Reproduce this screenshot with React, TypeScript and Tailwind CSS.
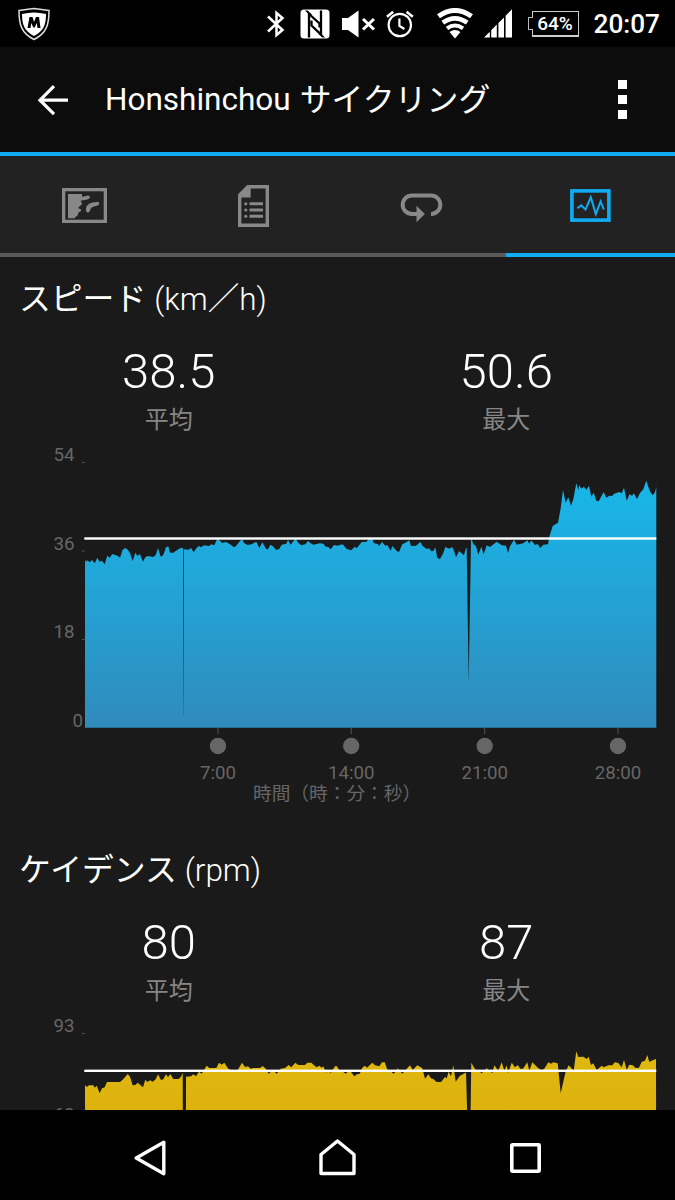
import type { ReactNode } from 'react'

type Segment = { x: number; y: number; points: string }

type Metric = {
  id: string
  title: string
  unit: ReactNode
  average: string
  max: string
  scale: string[]
  averageY: number
  colors: [string, string]
  times: { x: number; label: string }[]
  segments: Segment[]
}

// points are in thirds of a pixel, counted from the segment's own origin
const SPEED: Segment[] = [
  {
    x: 80,
    y: 90,
    points:
      '15,102 18,111 22,106 29,112 36,105 44,115 52,98 59,110 66,107 74,118 82,92 89,98 97,87 114,93 120,98 128,74 136,69 143,74 150,84 158,108 166,83 172,92 180,88 189,110 196,97 204,93 220,96 227,90 234,69 242,95 250,90 258,67 265,64 270,83 280,83 288,77 303,68 308,70 312,73 326,74 333,69 341,82 350,68 357,63 363,67 372,61 388,63 394,58 403,61 411,43 417,44 426,54 438,51 450,58 462,67 468,63 478,50 486,42 492,54 503,60 515,58 529,50 538,69 547,52 557,70 563,74 571,59 578,63 588,74 597,73 605,59 619,56 624,45 632,59 640,49 647,42 655,53 664,61 676,58 684,48 692,55 700,59 720,55',
  },
  {
    x: 310,
    y: 90,
    points:
      '40,56 47,65 55,66 62,73 72,60 82,62 98,58 110,72 124,76 134,65 140,70 155,51 170,50 175,43 187,43 192,55 203,57 207,63 216,51 226,62 232,60 242,77 247,63 260,78 267,81 277,58 290,51 298,46 303,63 318,62 331,51 338,63 350,72 357,70 364,79 370,78 376,67 382,99 390,102 400,84 406,66 418,71 426,66 431,74 438,97 447,78 462,91 468,68 470,70 476,475 483,45 485,43 490,57 498,64 505,89 514,65 521,88 530,61 540,66 560,50 575,61 588,62 594,84 600,64 612,44 620,59 640,55 652,46 658,57 661,50',
  },
  {
    x: 530,
    y: 35,
    points:
      '5,212 15,225 23,222 31,234 40,224 54,223 58,200 68,168 84,158 92,115 99,60 107,98 115,82 123,107 130,88 139,40 145,60 148,46 154,56 162,50 169,60 177,47 184,80 191,68 199,92 206,94 221,66 229,83 238,77 246,78 253,71 268,66 275,70 282,53 290,92 299,72 306,78 311,70 321,87 330,69 340,58 349,32 354,48 361,66 368,76 375,67 379,50',
  },
]

const CADENCE: Segment[] = [
  {
    x: 0,
    y: -176,
    points:
      '255,765 260,771 267,766 280,766 284,773 290,767 299,790 306,775 314,772 321,756 360,756 368,749 383,732 390,740 398,766 406,765 413,758 429,772 436,749 442,756 450,751 458,755 467,748 474,733 483,750 490,748 498,733 504,742 511,732 520,747 536,747 543,740 548,728 549,1100 557,1100 558,740 573,739 580,733 588,739 597,725 605,731 620,707 628,714 649,714 657,698 665,704 673,698 685,716 695,721 712,722 726,698 735,711 744,709 752,716 760,714 780,714 788,708 797,716 806,731 818,720 830,731 842,716 855,714 866,705 874,712 886,698 895,705 915,705 922,698 934,698 942,706 950,712 958,707 965,713 970,709 978,728 985,719 992,729 1005,709',
  },
  {
    x: 335,
    y: -176,
    points:
      '5,708 12,720 20,722 32,731 42,722 50,728 58,739 66,733 74,731 82,713 90,707 96,713 112,698 120,706 133,709 141,697 149,697 158,722 168,724 175,731 182,725 188,715 202,731 210,722 225,706 233,720 247,706 262,715 270,746 280,733 288,745 295,747 305,756 318,756 330,741 335,745 341,725 348,739 355,706 362,755 374,738 390,729 393,728 398,900 406,900 409,698 420,718 430,722 440,730 455,715 472,730 478,706 490,722 500,697 508,722 515,706 519,730 530,698 540,712 548,705 556,716 564,716 577,697 583,722 592,697 610,715 620,720 628,716 640,697 648,701 655,697 668,700 677,790 692,724 701,706 716,722 724,664 730,681 745,680 755,687 761,680 768,705 775,700 785,720 800,707 806,712 820,706 832,706 839,697 850,699 860,712 867,690 875,720 883,704 893,706 902,714 912,713 920,695 930,692 937,675 943,696 950,692 955,690 963,687',
  },
]

const METRICS: Metric[] = [
  {
    id: 'speed',
    title: 'スピード',
    unit: <>(km<b className="font-normal">／</b>h)</>,
    average: '38.5',
    max: '50.6',
    scale: ['54', '36', '18'],
    averageY: 103.5,
    colors: ['#18b7ea', '#308bbc'],
    times: [
      { x: 218, label: '7:00' },
      { x: 351.2, label: '14:00' },
      { x: 484.7, label: '21:00' },
      { x: 618, label: '28:00' },
    ],
    segments: SPEED,
  },
  {
    id: 'cadence',
    title: 'ケイデンス',
    unit: '(rpm)',
    average: '80',
    max: '87',
    scale: ['93', '62'],
    averageY: 64.8,
    colors: ['#dfb90f', '#d99a08'],
    times: [],
    segments: CADENCE,
  },
]

const BASELINE = 292.7

function areaPath(segments: Segment[]) {
  const points = segments.flatMap(segment =>
    segment.points.split(' ').map(pair => {
      const [x, y] = pair.split(',').map(Number)
      return `${(segment.x + x / 3).toFixed(1)} ${Math.min(segment.y + y / 3, BASELINE).toFixed(1)}`
    })
  )
  return `M85 ${BASELINE}L${points.join('L')}L656.3 ${BASELINE}Z`
}

function Chart({ metric }: { metric: Metric }) {
  const hasTimes = metric.times.length > 0

  return (
    <svg className="block h-[393px] w-[675px] shrink-0" viewBox="0 0 675 393">
      <defs>
        <linearGradient id={metric.id} x1="0" y1="45" x2="0" y2="293" gradientUnits="userSpaceOnUse">
          <stop offset="0" stopColor={metric.colors[0]} />
          <stop offset="1" stopColor={metric.colors[1]} />
        </linearGradient>
        <linearGradient id="pause" x1="0" y1="113" x2="0" y2="281" gradientUnits="userSpaceOnUse">
          <stop offset="0" stopColor="#12405a" />
          <stop offset="0.5" stopColor="#1c5878" />
          <stop offset="1" stopColor="#2c7aa5" />
        </linearGradient>
      </defs>

      <path d={areaPath(metric.segments)} fill={`url(#${metric.id})`} />
      {metric.id === 'speed' && <rect x="183" y="113" width="1" height="168" fill="url(#pause)" />}
      <rect x="84.3" y={metric.averageY - 1.2} width="572" height="2.4" fill="#fff" />

      <g fill="#666" fontSize="18.7" fontFamily="Roboto, sans-serif">
        {metric.scale.map((value, i) => (
          <g key={value}>
            <text x="74.5" y={26.4 + i * 88.5} textAnchor="end">{value}</text>
            <rect x="82" y={27 + i * 88.5} width="2.5" height="1" fill="#555" />
          </g>
        ))}
        {hasTimes && <text x="83" y="291.8" textAnchor="end">0</text>}
        {metric.times.map(time => (
          <g key={time.label}>
            <rect x={time.x - 0.5} y="293" width="1" height="6" fill="#555" />
            <circle cx={time.x} cy="311" r="8.2" />
            <text x={time.x} y="344" textAnchor="middle">{time.label}</text>
          </g>
        ))}
      </g>
      {hasTimes && (
        <text x="253" y="365.2" fill="#666" fontSize="18.7" fontFamily="'Noto Sans CJK JP', sans-serif">
          時間（時：分：秒）
        </text>
      )}
    </svg>
  )
}

function Stat({ value, label }: { value: string; label: string }) {
  return (
    <div className="flex flex-1 flex-col items-center">
      <div className="flex h-16 items-center text-[49px] leading-none font-light">{value}</div>
      <div className="flex h-8 items-center pb-0.5 font-['Noto_Sans_CJK_JP'] text-2xl leading-none text-[#868686]">{label}</div>
    </div>
  )
}

function MetricSection({ metric }: { metric: Metric }) {
  return (
    <section className="flex h-[571px] shrink-0 flex-col">
      <h2 className="flex h-[82px] items-center gap-[8px] pl-[19px] text-[31.5px] leading-none font-light">
        <span className="pb-0.5 font-['Noto_Sans_CJK_JP'] text-[31.8px] font-normal">{metric.title}</span>
        <span className="pt-[3px] font-[Roboto,'Noto_Sans_CJK_JP']">
          {metric.unit}
        </span>
      </h2>
      <div className="flex">
        <Stat value={metric.average} label="平均" />
        <Stat value={metric.max} label="最大" />
      </div>
      <Chart metric={metric} />
    </section>
  )
}

function StatusBar() {
  return (
    <div className="flex h-[47px] shrink-0 items-center bg-black pr-[15px] pl-[17px]">
      <svg className="h-[34px] w-[34px]" viewBox="0 0 34 34">
        <path d="M2 3.5Q9 2.5 17 1.5Q25 2.5 32 3.5C32 17 30 26 17 32.5C4 26 2 17 2 3.5Z" fill="none" stroke="#ddd" strokeWidth="1.5" />
        <path d="M5 7Q17 4 29 7C29 17 27 24 17 29C7 24 5 17 5 7Z" fill="#fff" />
        <path d="M10.5 21L12.5 10h3L17 15l2-5h3l1.5 11h-3l-.8-5-2 4.5h-1.4l-2-4.5-.8 5z" fill="#000" />
      </svg>
      <div className="ml-auto flex items-center text-white">
        <svg className="h-[28px] w-[18px]" viewBox="0 0 18 28" fill="none" stroke="currentColor" strokeWidth="2.5">
          <path d="M1 6.5l14.5 13.5-6 5V3l6 5L1 21.5" />
        </svg>
        <svg className="ml-[15px] h-[30px] w-[30px]" viewBox="0 0 30 30">
          <rect x="0.5" y="0.5" width="29" height="29" rx="3.5" fill="currentColor" />
          <path d="M9 28.5V5L19.5 14.5v4M21 1.5V25.5L11.5 16.5v-5" fill="none" stroke="#000" strokeWidth="2.3" />
          <path d="M5 1.5h2.5l4 3.5v3zM25 28.5h-2.5l-4-3.5v-3z" fill="#000" />
        </svg>
        <svg className="ml-3 h-[28px] w-[33px]" viewBox="0 0 33 28">
          <path d="M0 8h6L16.5.5v27L6 20H0z" fill="currentColor" />
          <path d="M21 9l11 10.5M32 9L21 19.5" stroke="currentColor" strokeWidth="3" />
        </svg>
        <svg className="ml-[11px] h-[28px] w-[28px]" viewBox="0 0 28 28" fill="none" stroke="currentColor" strokeWidth="2.2">
          <circle cx="13.8" cy="15" r="11.2" />
          <path d="M13.4 8.5V16l5 3" />
          <path d="M1 6.8l6.2-5M26.8 6.8l-6.2-5" strokeWidth="2.6" />
        </svg>
        <svg className="ml-[23px] h-[31px] w-[36px]" viewBox="0 0 36 31" fill="none" stroke="currentColor">
          <path d="M1.5 8.2Q18-3.2 34.5 8.2" strokeWidth="5" />
          <path d="M5.8 14.6Q18 6 30.2 14.6" strokeWidth="4.6" />
          <path d="M10 20.4Q18 14.6 26 20.4" strokeWidth="4" />
          <path d="M12.5 24Q18 20 23.5 24L18 30.5z" fill="currentColor" stroke="none" />
        </svg>
        <svg className="ml-[11px] h-[29px] w-[28px]" viewBox="0 0 28 29" fill="currentColor">
          <path d="M0 28.5l5.8-5.8v5.8zM7.2 21.3l5.6-5.8v13H7.2zM14.4 14.1L20 8.4v20.1h-5.6zM21.6 6.7L28 .2v28.3h-6.4z" />
        </svg>
        <div className="ml-4 flex items-center">
          <span className="z-10 -mr-px h-[13px] w-[5px] border border-r-0 border-[#bbb] bg-black" />
          <span className="flex h-[26px] w-[47px] items-center justify-center border border-b-2 border-[#ccc] text-[19px] leading-none font-medium">
            64%
          </span>
        </div>
        <span className="ml-[15px] pt-0.5 text-[26.2px] leading-none font-medium">20:07</span>
      </div>
    </div>
  )
}

function Header() {
  return (
    <header className="flex h-[109px] shrink-0 items-center border-b-4 border-[#11abf2] bg-[#0c0c0c] pr-[48px] pl-[37px]">
      <svg className="h-[32px] w-[32px]" viewBox="0 0 32 32" fill="none" stroke="#fff" strokeWidth="3.2">
        <path d="M31 16.2H3M17 2.2l-14 14 14 14" />
      </svg>
      <h1 className="ml-9 flex items-center gap-[9px] text-[31.5px] leading-none font-normal">
        <span className="pt-px">Honshinchou</span>
        <span className="pt-0.5 text-[31.9px]">サイクリング</span>
      </h1>
      <div className="ml-auto flex flex-col gap-[6px]">
        <span className="size-[9px] bg-white" />
        <span className="size-[9px] bg-white" />
        <span className="size-[9px] bg-white" />
      </div>
    </header>
  )
}

function Tab({ active = false, children }: { active?: boolean; children: ReactNode }) {
  return (
    <button
      className={
        active
          ? 'flex flex-1 items-center justify-center border-b-4 border-[#11abf2] text-[#11abf2]'
          : 'flex flex-1 items-center justify-center border-b-4 border-[#5b5a5a] text-[#888]'
      }
    >
      {children}
    </button>
  )
}

function Tabs() {
  return (
    <nav className="flex h-[101px] shrink-0 bg-[#222]">
      <Tab>
        <svg className="mt-0.5 h-[35px] w-[45px]" viewBox="0 0 45 35" fill="currentColor">
          <rect x="1.6" y="1.6" width="41.8" height="31.8" fill="none" stroke="currentColor" strokeWidth="3.4" />
          <path d="M6 6h14v2.8c2-.6 3.5-.5 5-1.1 2-.6 3.5.8 2.6 2.4-1 1.6-3.4 1.6-5 2-2 .2-4 .5-4 1.3 1 .8 1.7 1.7 1.2 2.8-.6 1.5-2 1.3-2.6 2.5-.5.9-.8.8-.9 1.5.8.7 2.3.4 2.8 1.5.8 1.6-2.2 2-2.8 3.3-.4 1-.2 1.5-.8 2.6-.5.8-1.4.7-2 1.5-.6.7-.6.8-.9 1.2H6z" />
          <path d="M24 22.5c-1-6 5-8.3 9.3-8.3 1.3-.1 3.6-.9 3.9 1 .4 2.1-2.6 2.8-5 3.2-3.2.6-3.8 3.2-4.6 5-.9 2-3.3 1.1-3.6-.9z" />
        </svg>
      </Tab>
      <Tab>
        <svg className="mt-0.5 h-[42px] w-[31px]" viewBox="0 0 31 42" fill="currentColor">
          <path d="M1.7 10.2L10 1.7h19.3v38.6H1.7z" fill="none" stroke="currentColor" strokeWidth="3.4" />
          <path d="M0 9.5L9.5 0h3.2v12.5H0z" />
          <path d="M11.5 18.8H25M11.5 25H25M11.5 31.3H25" stroke="currentColor" strokeWidth="3" />
          <circle cx="7.8" cy="18.8" r="1.6" />
          <circle cx="7.8" cy="25" r="1.6" />
          <circle cx="7.8" cy="31.3" r="1.6" />
        </svg>
      </Tab>
      <Tab>
        <svg className="mt-[7px] h-[30px] w-[43px]" viewBox="0 0 43 30">
          <path d="M17 21h-5a9.3 9.3 0 0 1 0-18.6h19a9.3 9.3 0 0 1 0 18.6" fill="none" stroke="currentColor" strokeWidth="4" />
          <path d="M16.5 12.8l8.4 8.2-8.4 8.3z" fill="currentColor" />
        </svg>
      </Tab>
      <Tab active>
        <svg className="mt-0.5 h-[33px] w-[41px]" viewBox="0 0 41 33" fill="none" stroke="currentColor">
          <rect x="1.9" y="1.9" width="37" height="29.2" strokeWidth="3.6" />
          <path d="M7.3 19.2l4-2.8 4.2 4.2 5.3-12.3 5 16.8 4.8-12.6 3.2 8" strokeWidth="2" />
        </svg>
      </Tab>
    </nav>
  )
}

function NavBar() {
  return (
    <div className="flex h-[90px] shrink-0 items-center bg-black pt-1.5 pl-[134px] text-white">
      <svg className="h-[36px] w-[32px]" viewBox="0 0 32 36" fill="none" stroke="currentColor" strokeWidth="3.4" strokeLinejoin="round">
        <path d="M29.8 2.2v31.6L2.2 18z" />
      </svg>
      <svg className="ml-[152px] h-[38px] w-[40px]" viewBox="0 0 40 38" fill="none" stroke="currentColor" strokeWidth="3.4" strokeLinejoin="round">
        <path d="M3 34.5V15.5L19.5 2 36 15.5v19z" />
      </svg>
      <svg className="ml-[152px] h-[31px] w-[31px]" viewBox="0 0 31 31" fill="none" stroke="currentColor" strokeWidth="3.6">
        <rect x="1.8" y="1.8" width="27.4" height="26.4" rx="0.6" />
      </svg>
    </div>
  )
}

export default function App() {
  return (
    <div className="flex h-[1200px] w-[675px] flex-col overflow-hidden bg-[#1a1a1a] font-[Roboto,'Noto_Sans_CJK_JP',sans-serif] text-white">
      <StatusBar />
      <Header />
      <Tabs />
      <main className="flex min-h-0 flex-1 flex-col overflow-hidden">
        {METRICS.map(metric => (
          <MetricSection key={metric.id} metric={metric} />
        ))}
      </main>
      <NavBar />
    </div>
  )
}
